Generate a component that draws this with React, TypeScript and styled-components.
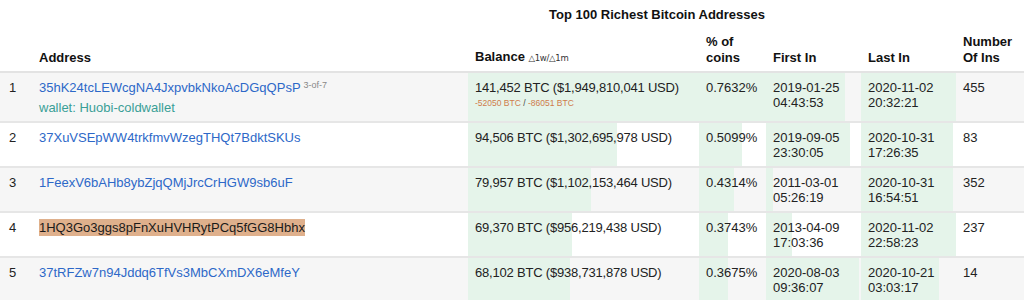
import React from "react";
import styled, { createGlobalStyle } from "styled-components";

const Global = createGlobalStyle`
  html, body { margin: 0; padding: 0; background: #fff; }
  body { font-family: "Liberation Sans", Arial, Helvetica, sans-serif; color: #222; }
`;

const Page = styled.div`
  width: 1024px;
  overflow: hidden;
`;

const Title = styled.div`
  padding: 7px 0 0 549px;
  font-size: 13px;
  line-height: 16px;
  font-weight: bold;
  color: #111;
`;

const Table = styled.table`
  width: 1024px;
  table-layout: fixed;
  border-collapse: collapse;
  font-size: 13px;
  line-height: 15px;
`;

const Th = styled.th`
  text-align: left;
  vertical-align: bottom;
  font-weight: bold;
  font-size: 13px;
  line-height: 16px;
  color: #111;
  padding: 11px 7px 5px;
  border-bottom: 2px solid #e3e3e3;
`;

const Delta = styled.span`
  font-weight: normal;
  font-size: 8.5px;
  color: #333;
  font-family: "DejaVu Sans", "Liberation Sans", sans-serif;
  letter-spacing: -0.3px;
`;

const Row = styled.tr<{ $odd: boolean }>`
  background: ${(p) => (p.$odd ? "#f6f6f6" : "#ffffff")};
  border-top: 2px solid #e6e6e6;
`;

const Td = styled.td<{ $bar?: number }>`
  vertical-align: top;
  padding: 7px 7px 6px;
  background: ${(p) =>
    p.$bar !== undefined
      ? `linear-gradient(to right, #e5f4ea ${p.$bar}%, transparent ${p.$bar}%)`
      : "transparent"};
`;

const NumTd = styled(Td)`
  padding-left: 9px;
`;

const BalanceTd = styled(Td)`
  letter-spacing: -0.2px;
`;

const Addr = styled.a<{ $hl?: boolean }>`
  color: ${(p) => (p.$hl ? "#1a1a1a" : "#2d68c8")};
  background: ${(p) => (p.$hl ? "#dfb08c" : "transparent")};
  text-decoration: none;
  padding: 1px 0;
`;

const Sup = styled.span`
  font-size: 9px;
  color: #888;
  vertical-align: 4px;
  line-height: 0;
  margin-left: 3px;
`;

const Wallet = styled.div`
  color: #3a9f96;
  margin: 5px 0 0;
`;

const DeltaLine = styled.div`
  font-size: 8.5px;
  line-height: 13px;
  margin-top: 2px;
  color: #444;
  letter-spacing: 0;
`;

const Neg = styled.span`
  color: #cf7c4c;
`;

type RowData = {
  addr: string;
  sup?: string;
  wallet?: string;
  hl?: boolean;
  bal: string;
  d?: [string, string];
  pct: string;
  first: [string, string];
  last: [string, string];
  ins: string;
  bars: [number, number, number, number];
};

const rows: RowData[] = [
  {
    addr: "35hK24tcLEWcgNA4JxpvbkNkoAcDGqQPsP",
    sup: "3-of-7",
    wallet: "Huobi-coldwallet",
    bal: "141,452 BTC ($1,949,810,041 USD)",
    d: ["-52050 BTC", "-86051 BTC"],
    pct: "0.7632%",
    first: ["2019-01-25", "04:43:53"],
    last: ["2020-11-02", "20:32:21"],
    ins: "455",
    bars: [100, 100, 83, 100],
  },
  {
    addr: "37XuVSEpWW4trkfmvWzegTHQt7BdktSKUs",
    bal: "94,506 BTC ($1,302,695,978 USD)",
    pct: "0.5099%",
    first: ["2019-09-05", "23:30:05"],
    last: ["2020-10-31", "17:26:35"],
    ins: "83",
    bars: [64.5, 64, 88, 97],
  },
  {
    addr: "1FeexV6bAHb8ybZjqQMjJrcCrHGW9sb6uF",
    bal: "79,957 BTC ($1,102,153,464 USD)",
    pct: "0.4314%",
    first: ["2011-03-01", "05:26:19"],
    last: ["2020-10-31", "16:54:51"],
    ins: "352",
    bars: [53.2, 52, 7, 97],
  },
  {
    addr: "1HQ3Go3ggs8pFnXuHVHRytPCq5fGG8Hbhx",
    hl: true,
    bal: "69,370 BTC ($956,219,438 USD)",
    pct: "0.3743%",
    first: ["2013-04-09", "17:03:36"],
    last: ["2020-11-02", "22:58:23"],
    ins: "237",
    bars: [45, 43, 27, 100],
  },
  {
    addr: "37tRFZw7n94Jddq6TfVs3MbCXmDX6eMfeY",
    bal: "68,102 BTC ($938,731,878 USD)",
    pct: "0.3675%",
    first: ["2020-08-03", "09:36:07"],
    last: ["2020-10-21", "03:03:17"],
    ins: "14",
    bars: [44.2, 43, 98, 82],
  },
];

export default function App() {
  return (
    <Page>
      <Global />
      <Title>Top 100 Richest Bitcoin Addresses</Title>
      <Table>
        <colgroup>
          <col style={{ width: 32 }} />
          <col style={{ width: 436 }} />
          <col style={{ width: 231 }} />
          <col style={{ width: 67 }} />
          <col style={{ width: 95 }} />
          <col style={{ width: 95 }} />
          <col style={{ width: 68 }} />
        </colgroup>
        <thead>
          <tr>
            <Th></Th>
            <Th>Address</Th>
            <Th>
              Balance <Delta>△1w/△1m</Delta>
            </Th>
            <Th>
              % of
              <br />
              coins
            </Th>
            <Th>First In</Th>
            <Th>Last In</Th>
            <Th>
              Number
              <br />
              Of Ins
            </Th>
          </tr>
        </thead>
        <tbody>
          {rows.map((r, i) => (
            <Row key={r.addr} $odd={i % 2 === 0}>
              <NumTd>{i + 1}</NumTd>
              <Td>
                <Addr href="#" $hl={r.hl}>
                  {r.addr}
                </Addr>
                {r.sup && <Sup>{r.sup}</Sup>}
                {r.wallet && <Wallet>wallet: {r.wallet}</Wallet>}
              </Td>
              <BalanceTd $bar={r.bars[0]}>
                {r.bal}
                {r.d && (
                  <DeltaLine>
                    <Neg>{r.d[0]}</Neg> / <Neg>{r.d[1]}</Neg>
                  </DeltaLine>
                )}
              </BalanceTd>
              <Td $bar={r.bars[1]}>{r.pct}</Td>
              <Td $bar={r.bars[2]}>
                {r.first[0]}
                <br />
                {r.first[1]}
              </Td>
              <Td $bar={r.bars[3]}>
                {r.last[0]}
                <br />
                {r.last[1]}
              </Td>
              <Td>{r.ins}</Td>
            </Row>
          ))}
        </tbody>
      </Table>
    </Page>
  );
}
